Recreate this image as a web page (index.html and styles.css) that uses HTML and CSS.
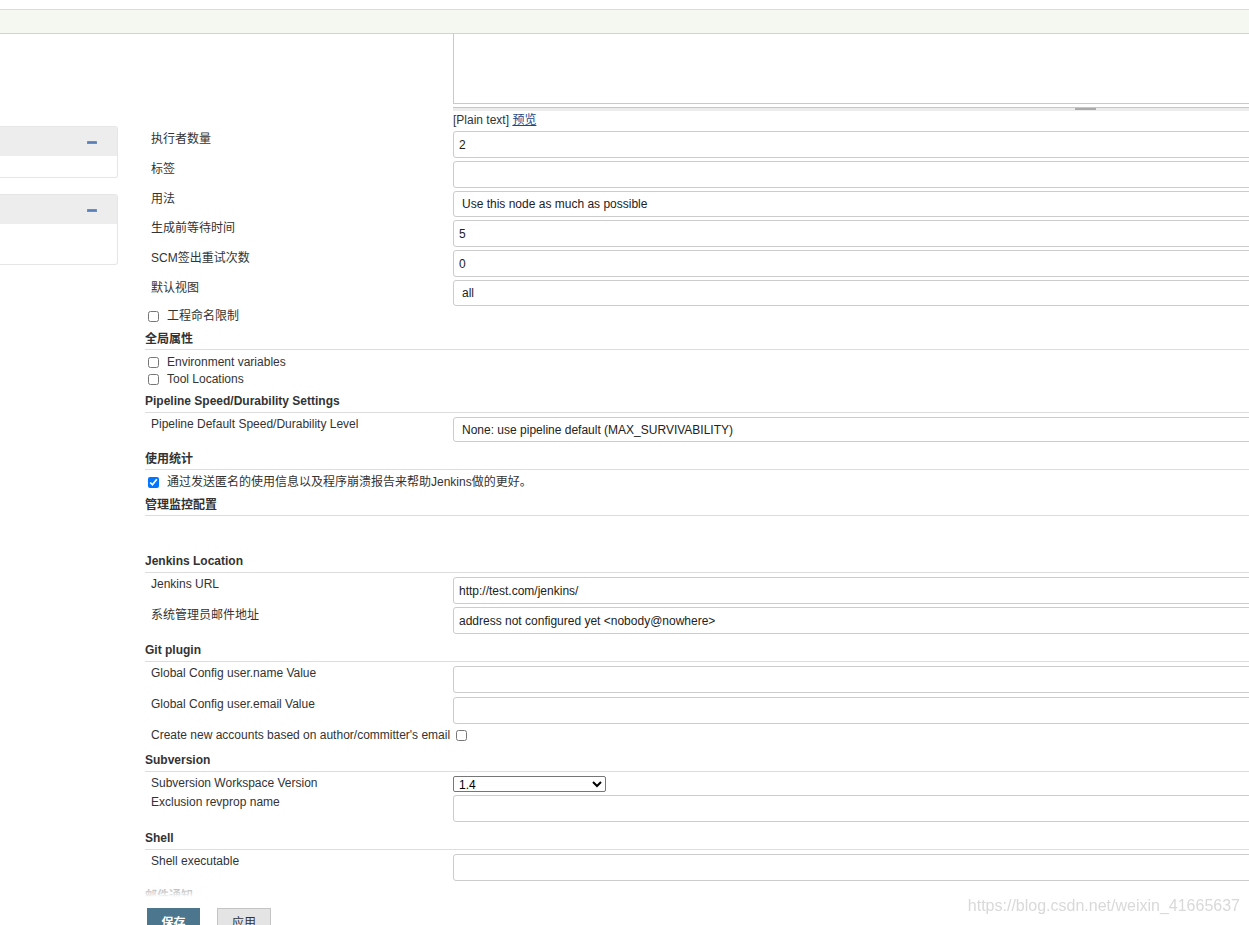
FILE: index.html
```html
<!DOCTYPE html>
<html lang="zh">
<head>
<meta charset="utf-8">
<title>Configure System [Jenkins]</title>
<link rel="stylesheet" href="styles.css">
</head>
<body>
<div class="topbar"></div>
<div class="page">
  <aside class="side">
    <div class="pane">
      <div class="pane-h"><svg class="collapse" width="10" height="3" viewBox="0 0 10 3"><rect x="0" y="0" width="10" height="3" rx="0.5" fill="#6b8ec3"/><rect x="1" y="1" width="8" height="1" fill="#5a7fb8"/></svg></div>
      <div class="pane-b short"></div>
    </div>
    <div class="pane">
      <div class="pane-h"><svg class="collapse" width="10" height="3" viewBox="0 0 10 3"><rect x="0" y="0" width="10" height="3" rx="0.5" fill="#6b8ec3"/><rect x="1" y="1" width="8" height="1" fill="#5a7fb8"/></svg></div>
      <div class="pane-b tall"></div>
    </div>
  </aside>
  <main class="main">
    <div class="field ta-row">
      <div class="label"></div>
      <div class="control">
        <textarea class="ta"></textarea>
        <div class="grip"><span class="grip-bar"></span></div>
        <div class="preview">[Plain text] <a href="#">预览</a></div>
      </div>
    </div>
    <div class="field"><label class="label cjk">执行者数量</label><div class="control"><input class="inp" type="text" value="2"></div></div>
    <div class="field"><label class="label cjk">标签</label><div class="control"><input class="inp" type="text" value=""></div></div>
    <div class="field"><label class="label cjk">用法</label><div class="control"><select class="sel"><option>Use this node as much as possible</option></select></div></div>
    <div class="field"><label class="label cjk">生成前等待时间</label><div class="control"><input class="inp" type="text" value="5"></div></div>
    <div class="field"><label class="label cjk">SCM签出重试次数</label><div class="control"><input class="inp" type="text" value="0"></div></div>
    <div class="field"><label class="label cjk">默认视图</label><div class="control"><select class="sel"><option>all</option></select></div></div>
    <div class="check"><input type="checkbox"><span>工程命名限制</span></div>

    <div class="section-h cjk">全局属性</div>
    <div class="check"><input type="checkbox"><span>Environment variables</span></div>
    <div class="check"><input type="checkbox"><span>Tool Locations</span></div>

    <div class="section-h">Pipeline Speed/Durability Settings</div>
    <div class="field"><label class="label">Pipeline Default Speed/Durability Level</label><div class="control"><select class="sel slim"><option>None: use pipeline default (MAX_SURVIVABILITY)</option></select></div></div>

    <div class="section-h cjk">使用统计</div>
    <div class="check"><input type="checkbox" checked><span>通过发送匿名的使用信息以及程序崩溃报告来帮助Jenkins做的更好。</span></div>

    <div class="section-h cjk">管理监控配置</div>

    <div class="section-h spaced">Jenkins Location</div>
    <div class="field"><label class="label">Jenkins URL</label><div class="control"><input class="inp" type="text" value="http://test.com/jenkins/"></div></div>
    <div class="field"><label class="label cjk">系统管理员邮件地址</label><div class="control"><input class="inp" type="text" value="address not configured yet &lt;nobody@nowhere&gt;"></div></div>

    <div class="section-h">Git plugin</div>
    <div class="field"><label class="label">Global Config user.name Value</label><div class="control"><input class="inp" type="text" value=""></div></div>
    <div class="field roomy"><label class="label">Global Config user.email Value</label><div class="control"><input class="inp" type="text" value=""></div></div>
    <div class="field inline"><label class="label-inline">Create new accounts based on author/committer's email<input type="checkbox"></label></div>

    <div class="section-h">Subversion</div>
    <div class="field"><label class="label">Subversion Workspace Version</label><div class="control"><select class="native"><option>1.4</option></select></div></div>
    <div class="field"><label class="label">Exclusion revprop name</label><div class="control"><input class="inp" type="text" value=""></div></div>

    <div class="section-h">Shell</div>
    <div class="field"><label class="label">Shell executable</label><div class="control"><input class="inp" type="text" value=""></div></div>

    <div class="section-h cjk faded">邮件通知</div>
  </main>
</div>

<div class="bottom-bar">
  <button class="btn primary" type="button">保存</button>
  <button class="btn" type="button">应用</button>
</div>
<div class="watermark">https://blog.csdn.net/weixin_41665637</div>
</body>
</html>
```

FILE: styles.css
```css
html, body {
  margin: 0;
  padding: 0;
}
body {
  font-family: "Liberation Sans", "Noto Sans CJK SC", sans-serif;
  font-size: 12px;
  color: #333;
  background: #fff;
  overflow: hidden;
  height: 925px;
}

.topbar {
  margin-top: 9px;
  height: 23px;
  background: #f5f7f1;
  border-top: 1px solid #dcdcdc;
  border-bottom: 1px solid #d3d3d3;
}

.page {
  display: flex;
  align-items: flex-start;
}

/* side panel */
.side {
  flex: none;
  width: 145px;
  padding-top: 92px;
}
.pane {
  width: 117px;
  border: 1px solid #e6e6e6;
  border-left: none;
  border-radius: 0 3px 3px 0;
  background: #fff;
  overflow: hidden;
}
.pane + .pane {
  margin-top: 16px;
}
.pane-h {
  height: 29px;
  background: #ededed;
  display: flex;
  align-items: center;
  justify-content: flex-end;
  padding-right: 20px;
  padding-top: 1px;
  box-sizing: border-box;
}
.collapse {
  display: block;
}
.pane-b.short { height: 21px; }
.pane-b.tall { height: 40px; }

/* main form */
.main {
  flex: none;
  width: 1572px;
}
.field {
  display: grid;
  grid-template-columns: 308px 1264px;
  margin-top: 3px;
}
.label {
  padding-left: 6px;
  line-height: 14px;
}
.label.cjk {
  padding-top: 1px;
}
.control {
  min-width: 0;
}

.ta-row {
  margin-top: 0;
}
.ta {
  display: block;
  box-sizing: border-box;
  width: 100%;
  height: 70px;
  margin: 0;
  border: 1px solid #c9c9c9;
  border-top: none;
  resize: none;
  font: inherit;
}
.grip {
  margin-top: 3px;
  height: 3px;
  border-top: 1px solid #c6c6c6;
  background: #ececec;
  display: flex;
  justify-content: center;
}
.grip-bar {
  display: block;
  width: 21px;
  height: 2px;
  background: #ababab;
}
.preview {
  line-height: 17px;
  padding-top: 1px;
  height: 17px;
  box-sizing: border-box;
  color: #333;
}
.preview a {
  color: #204a87;
  text-decoration: underline;
}

.inp,
.sel {
  display: block;
  box-sizing: border-box;
  width: 100%;
  height: 27px;
  margin: 0;
  border: 1px solid #cccccc;
  border-radius: 3px;
  background: #fff;
  font-family: "Liberation Sans", "Noto Sans CJK SC", sans-serif;
  font-size: 12px;
  color: #222;
  padding: 0 5px;
  outline: none;
}
.sel {
  -webkit-appearance: none;
  appearance: none;
  height: 26px;
  padding-left: 8px;
}
.sel.slim {
  height: 25px;
}
.native {
  display: block;
  width: 153px;
  height: 16px;
  margin: 0;
  padding: 0 0 0 1px;
  font-family: "Liberation Sans", sans-serif;
  font-size: 12px;
  color: #000;
  border: 1px solid #767676;
  border-radius: 2px;
  background: #fff;
}

/* checkbox rows */
.check {
  display: flex;
  align-items: center;
  box-sizing: border-box;
  height: 17px;
  padding-top: 2px;
  line-height: 15px;
}
.check input,
.label-inline input {
  width: 11px;
  height: 11px;
  margin: 0 8px 0 3px;
  flex: none;
}
.field + .check {
  margin-top: 1px;
}
.section-h + .check {
  margin-top: 3px;
}

.field.roomy {
  margin-top: 4px;
}
.field.inline {
  display: block;
  margin-top: 3px;
  line-height: 17px;
  height: 17px;
}
.label-inline {
  display: flex;
  align-items: center;
  padding-left: 6px;
}
.label-inline input {
  margin: 0 0 0 6px;
}

/* section headers */
.section-h {
  margin-top: 6px;
  line-height: 16px;
  padding-bottom: 3px;
  border-bottom: 1px solid #dddddd;
  font-weight: bold;
  color: #333;
}
.section-h.cjk {
  padding-top: 2px;
  line-height: 14px;
}
.field + .section-h {
  margin-top: 8px;
}
.section-h + .field {
  margin-top: 4px;
}
.section-h + .section-h {
  margin-top: 6px;
}
.section-h.spaced {
  margin-top: 37px;
}
.section-h.faded {
  margin-top: 6px;
}

/* bottom sticky bar */
.bottom-bar {
  position: fixed;
  left: 0;
  right: 0;
  bottom: 0;
  height: 40px;
  box-sizing: border-box;
  padding: 23px 0 0 147px;
  display: flex;
  gap: 17px;
  align-items: flex-start;
  background: linear-gradient(to bottom, rgba(255,255,255,0.55) 0, rgba(255,255,255,0.85) 9px, #ffffff 12px);
}
.btn {
  height: 30px;
  margin: 0;
  padding: 0;
  width: 54px;
  box-sizing: border-box;
  font-family: "Liberation Sans", "Noto Sans CJK SC", sans-serif;
  font-size: 12px;
  line-height: 14px;
  border: 1px solid #c4c4c4;
  background: #e4e4e4;
  color: #333;
  border-radius: 0;
}
.btn.primary {
  width: 53px;
  background: #4b768d;
  border-color: #4b768d;
  color: #fff;
  font-weight: bold;
}

.watermark {
  position: fixed;
  right: 9px;
  top: 897px;
  font-family: "Liberation Sans", sans-serif;
  font-size: 16px;
  line-height: 18px;
  color: #d9d9d9;
}
```
